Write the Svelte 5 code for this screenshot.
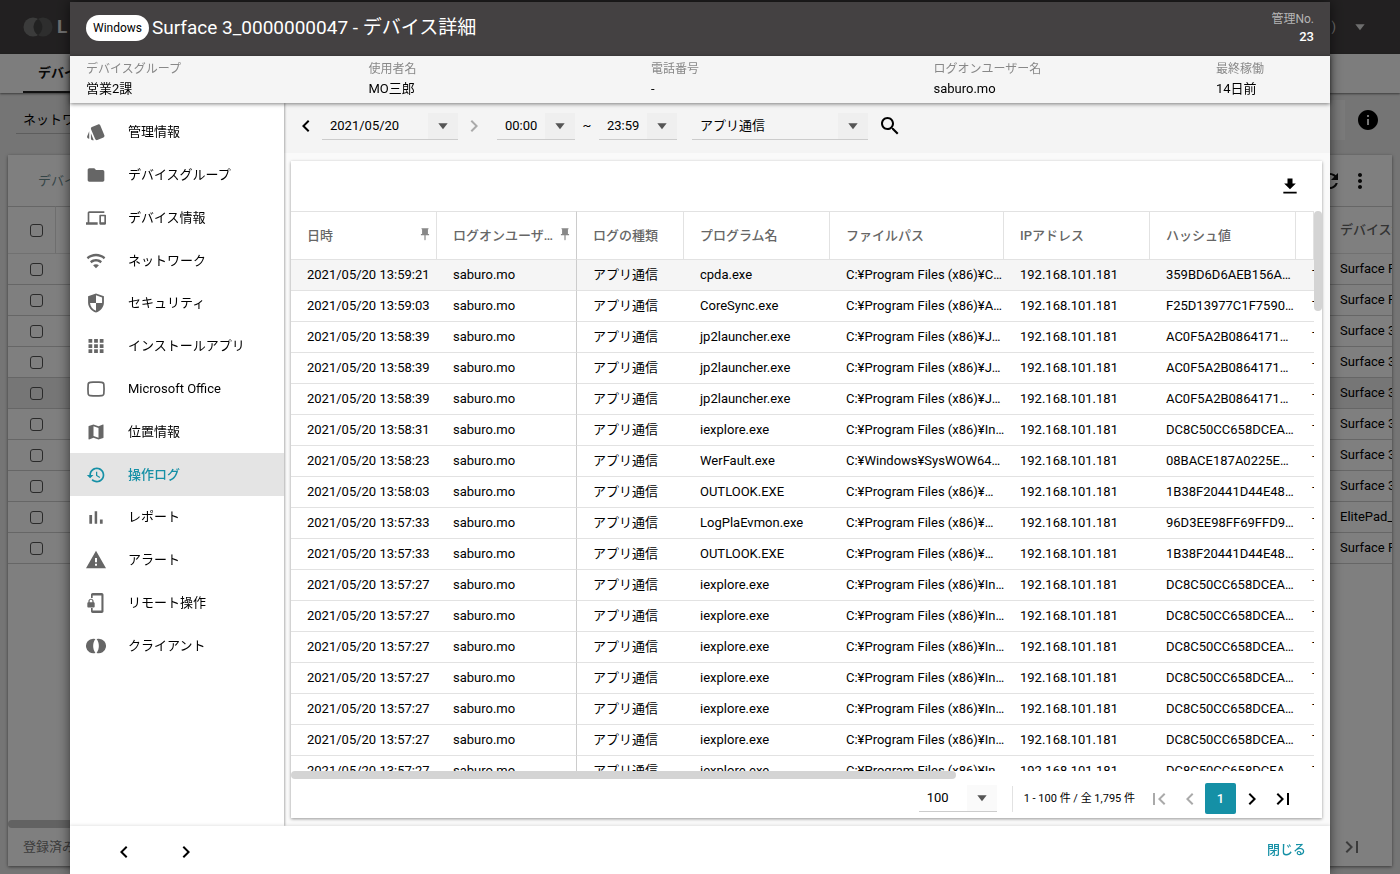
<script>
	const menu = [
		{ icon: 'style', label: '管理情報' },
		{ icon: 'folder', label: 'デバイスグループ' },
		{ icon: 'devices', label: 'デバイス情報' },
		{ icon: 'wifi', label: 'ネットワーク' },
		{ icon: 'shield', label: 'セキュリティ' },
		{ icon: 'apps', label: 'インストールアプリ' },
		{ icon: 'office', label: 'Microsoft Office' },
		{ icon: 'map', label: '位置情報' },
		{ icon: 'history', label: '操作ログ' },
		{ icon: 'chart', label: 'レポート' },
		{ icon: 'warning', label: 'アラート' },
		{ icon: 'remote', label: 'リモート操作' },
		{ icon: 'client', label: 'クライアント' }
	];

	const paths = {
		style:
			'M2.53 19.65l1.34.56v-9.03l-2.43 5.86c-.41 1.02.08 2.19 1.09 2.61zm19.5-3.7L17.07 3.98c-.31-.75-1.04-1.21-1.81-1.23-.26 0-.53.04-.79.15L7.1 5.95c-.75.31-1.21 1.03-1.23 1.8-.01.27.04.54.15.8l4.96 11.97c.31.76 1.05 1.22 1.83 1.23.26 0 .52-.05.77-.15l7.36-3.05c1.02-.42 1.51-1.59 1.09-2.6zM5.88 19.75c0 1.1.9 2 2 2h1.45l-3.45-8.34v6.34z',
		folder:
			'M10 4H4c-1.1 0-1.99.9-1.99 2L2 18c0 1.1.9 2 2 2h16c1.1 0 2-.9 2-2V8c0-1.1-.9-2-2-2h-8l-2-2z',
		devices:
			'M4 6h18V4H4c-1.1 0-2 .9-2 2v11H0v3h14v-3H4V6zm19 2h-6c-.55 0-1 .45-1 1v10c0 .55.45 1 1 1h6c.55 0 1-.45 1-1V9c0-.55-.45-1-1-1zm-1 9h-4v-7h4v7z',
		wifi: 'M.8 7.6l1.8 2.2c5.3-4.6 13.5-4.6 18.8 0l1.8-2.2C16.9 1.9 7.1 1.9.8 7.6zM4.8 12.4l1.8 2.2c3.1-2.7 7.7-2.7 10.8 0l1.8-2.2c-4.1-3.7-10.3-3.7-14.4 0zM8.5 17l3.5 3.7 3.5-3.7c-1.9-1.6-5.1-1.6-7 0z',
		shield:
			'M12 .5L2.5 4v7.5c0 5.6 4 10.4 9.5 12 5.5-1.6 9.5-6.4 9.5-12V4zM12 2.8l7.3 2.7V12H12v9.2C7.9 19.8 5.2 16.3 4.8 12H12z',
		apps: 'M3 8h4.500V3.500H3V8zm6.750 12.500h4.500V16h-4.500zM3 20.500h4.500V16H3zM3 14.250h4.500v-4.500H3zm6.750 0h4.500v-4.500h-4.500zM16.500 3.500V8H21V3.500zM9.750 8h4.500V3.500h-4.500zm6.750 6.250H21v-4.500h-4.500zm0 6.250H21V16h-4.500z',
		office:
			'M5 3C9 2.6 15 2.6 19 3c2 .2 3.2 1.3 3.4 3.2.4 3.7.4 7.9 0 11.6-.2 1.9-1.4 3-3.4 3.2-4 .4-10 .4-14 0-2-.2-3.2-1.3-3.4-3.2-.4-3.700-.4-7.900 0-11.600C1.800 4.300 3 3.200 5 3zM5.400 5c-1.200.1-1.700.7-1.800 1.600-.3 3.500-.3 7.300 0 10.800.1.9.6 1.500 1.800 1.600 4.100.4 9.100.4 13.200 0 1.200-.1 1.700-.7 1.800-1.600.3-3.500.3-7.300 0-10.800-.1-.9-.6-1.500-1.800-1.600-4.100-.4-9.100-.4-13.200 0z',
		map: 'M20.5 3l-.16.03L15 5.1 9 3 3.36 4.9c-.21.07-.36.25-.36.48V20.5c0 .28.22.5.5.5l.16-.03L9 18.9l6 2.1 5.64-1.9c.21-.07.36-.25.36-.48V3.5c0-.28-.22-.5-.5-.5zM15 19l-6-2.11V5l6 2.11V19z',
		history:
			'M13 3c-4.97 0-9 4.03-9 9H1l3.89 3.89.07.14L9 12H6c0-3.87 3.13-7 7-7s7 3.13 7 7-3.13 7-7 7c-1.93 0-3.68-.79-4.94-2.06l-1.42 1.42C8.27 19.99 10.51 21 13 21c4.97 0 9-4.03 9-9s-4.03-9-9-9zm-1 5v5l4.28 2.54.72-1.21-3.5-2.08V8H12z',
		chart: 'M4 9.5h3.3V20H4zM10.4 5h3v15h-3zM16.7 15H20v5h-3.3z',
		warning: 'M0 22h24L12 1 0 22zm13.2-3h-2.4v-2.4h2.4V19zm0-4.4h-2.4V9.5h2.4v5.1z',
		remote:
			'M19 0H8C6.9 0 6 .9 6 2v4h2V3h10.5v18H8v-3H6v4c0 1.1.9 2 2 2h11c1.1 0 2-.9 2-2V2c0-1.1-.9-2-2-2zM9.1 11V9.7C9.1 8 7.7 6.8 6 6.8S2.9 8 2.9 9.7V11c-.7 0-1.3.6-1.3 1.3v3.8c0 .7.6 1.4 1.3 1.4h6.2c.7 0 1.3-.7 1.3-1.4v-3.8c0-.7-.6-1.3-1.3-1.3zm-1.5 0H4.4V9.7c0-.9.7-1.5 1.6-1.500s1.600.6 1.600 1.500V11z',
		client:
			'M8.5 3.3a8.7 8.7 0 1 0 2.8 17c-3.600-4.800-3.600-11.800 0-16.600a8.700 8.700 0 0 0-2.800-.4zM15.500 3.300a8.700 8.700 0 1 1-2.800 17c3.600-4.800 3.600-11.800 0-16.600a8.700 8.700 0 0 1 2.800-.4z',
		left: 'M15.41 7.41L14 6l-6 6 6 6 1.41-1.41L10.83 12z',
		right: 'M10 6L8.59 7.41 13.17 12l-4.58 4.59L10 18l6-6z',
		first: 'M18.41 16.59L13.82 12l4.59-4.59L17 6l-6 6 6 6zM6 6h2v12H6z',
		last: 'M5.59 7.41L10.18 12l-4.59 4.59L7 18l6-6-6-6zM16 6h2v12h-2z',
		caret: 'M5 8h14l-7 9z',
		search:
			'M15.5 14h-.79l-.28-.27C15.41 12.59 16 11.11 16 9.5 16 5.91 13.09 3 9.5 3S3 5.91 3 9.5 5.91 16 9.5 16c1.61 0 3.09-.59 4.23-1.57l.27.28v.79l5 4.99L20.49 19l-4.99-5zm-6 0C7.01 14 5 11.99 5 9.5S7.01 5 9.5 5 14 7.01 14 9.5 11.99 14 9.5 14z',
		download: 'M19 9h-4V3H9v6H5l7 7 7-7zM4 19v2h16v-2H4z',
		pin: 'M6 2h12v2h-1v8h2v2h-6v8l-1 1-1-1v-8H5v-2h2V4H6z',
		info: 'M12 2C6.48 2 2 6.48 2 12s4.48 10 10 10 10-4.48 10-10S17.52 2 12 2zm1 15h-2v-6h2v6zm0-8h-2V7h2v2z',
		more: 'M12 8c1.1 0 2-.9 2-2s-.9-2-2-2-2 .9-2 2 .9 2 2 2zm0 2c-1.1 0-2 .9-2 2s.9 2 2 2 2-.9 2-2-.9-2-2-2zm0 6c-1.1 0-2 .9-2 2s.9 2 2 2 2-.9 2-2-.9-2-2-2z',
		refresh:
			'M17.65 6.35C16.2 4.9 14.21 4 12 4c-4.42 0-7.99 3.58-7.99 8s3.57 8 7.99 8c3.73 0 6.84-2.55 7.73-6h-2.08c-.82 2.33-3.04 4-5.65 4-3.31 0-6-2.69-6-6s2.69-6 6-6c1.66 0 3.14.69 4.22 1.78L13 11h7V4l-2.35 2.35z'
	};

	const logs = [
		['13:59:21', 'cpda.exe', 'C:¥Program Files (x86)¥C…', '359BD6D6AEB156A…'],
		['13:59:03', 'CoreSync.exe', 'C:¥Program Files (x86)¥A…', 'F25D13977C1F7590…'],
		['13:58:39', 'jp2launcher.exe', 'C:¥Program Files (x86)¥J…', 'AC0F5A2B0864171…'],
		['13:58:39', 'jp2launcher.exe', 'C:¥Program Files (x86)¥J…', 'AC0F5A2B0864171…'],
		['13:58:39', 'jp2launcher.exe', 'C:¥Program Files (x86)¥J…', 'AC0F5A2B0864171…'],
		['13:58:31', 'iexplore.exe', 'C:¥Program Files (x86)¥In…', 'DC8C50CC658DCEA…'],
		['13:58:23', 'WerFault.exe', 'C:¥Windows¥SysWOW64…', '08BACE187A0225E…'],
		['13:58:03', 'OUTLOOK.EXE', 'C:¥Program Files (x86)¥…', '1B38F20441D44E48…'],
		['13:57:33', 'LogPlaEvmon.exe', 'C:¥Program Files (x86)¥…', '96D3EE98FF69FFD9…'],
		['13:57:33', 'OUTLOOK.EXE', 'C:¥Program Files (x86)¥…', '1B38F20441D44E48…'],
		...Array.from({ length: 7 }, () => [
			'13:57:27',
			'iexplore.exe',
			'C:¥Program Files (x86)¥In…',
			'DC8C50CC658DCEA…'
		])
	];

	const devices = [
		'Surface Pro',
		'Surface Pro',
		'Surface 3',
		'Surface 3',
		'Surface 3',
		'Surface 3',
		'Surface 3',
		'Surface 3',
		'ElitePad_',
		'Surface Pro'
	];

	let current = $state('操作ログ');
</script>

{#snippet icon(name, size = 20)}
	<svg class="icon" width={size} height={size} viewBox="0 0 24 24" aria-hidden="true">
		<path d={paths[name]} fill-rule="evenodd" />
	</svg>
{/snippet}

{#snippet dropdown(label, value, kind)}
	<div class="dropdown {kind}">
		<select aria-label={label}>
			<option>{value}</option>
		</select>
		<span class="arrow">{@render icon('caret', 16)}</span>
	</div>
{/snippet}

<div class="page">
	<header class="app-bar">
		<svg width="30" height="20" viewBox="0 0 30 20" aria-hidden="true">
			<circle cx="10" cy="10" r="9.5" fill="#777" />
			<circle cx="20" cy="10" r="9.5" fill="#5c5c5c" />
			<path d="M15 2a9.5 9.5 0 0 1 0 16a9.5 9.5 0 0 1 0-16z" fill="#444" />
		</svg>
		<b class="brand">L</b>
		<span class="account">)</span>
		{@render icon('caret', 16)}
	</header>
	<nav class="tabs"><a href="#devices">デバイス</a></nav>
	<div class="filter">
		<span class="filter-name">ネットワーク</span>
		<span class="filter-box"></span>
		{@render icon('info', 24)}
	</div>
	<section class="list">
		<div class="list-bar">
			<span>デバイス</span>
			{@render icon('refresh', 24)}
			{@render icon('more', 24)}
		</div>
		<table class="device-table">
			<thead>
				<tr>
					<th class="check"><input type="checkbox" aria-label="すべて選択" /></th>
					<th></th>
					<th class="name">デバイス名</th>
				</tr>
			</thead>
			<tbody>
				{#each devices as device, i}
					<tr class:picked={i === 4}>
						<td class="check"><input type="checkbox" aria-label={device} /></td>
						<td></td>
						<td class="name">{device}</td>
					</tr>
				{/each}
			</tbody>
		</table>
		<div class="list-scroll"></div>
		<div class="list-foot">
			<span>登録済み</span>
			{@render icon('last', 24)}
		</div>
	</section>
</div>

<div class="scrim"></div>

<div class="modal" role="dialog" aria-labelledby="title">
	<header class="modal-head">
		<span class="os">Windows</span>
		<h1 id="title">Surface 3_0000000047 - デバイス詳細</h1>
		<div class="number">
			<span>管理No.</span>
			<b>23</b>
		</div>
	</header>

	<dl class="summary">
		<div><dt>デバイスグループ</dt><dd>営業2課</dd></div>
		<div><dt>使用者名</dt><dd>MO三郎</dd></div>
		<div><dt>電話番号</dt><dd>-</dd></div>
		<div><dt>ログオンユーザー名</dt><dd>saburo.mo</dd></div>
		<div><dt>最終稼働</dt><dd>14日前</dd></div>
	</dl>

	<div class="body">
		<nav class="side">
			<ul>
				{#each menu as item}
					<li>
						<button class:active={item.label === current} onclick={() => (current = item.label)}>
							{@render icon(item.icon)}
							{item.label}
						</button>
					</li>
				{/each}
			</ul>
		</nav>

		<main>
			<div class="search-bar">
				<button class="nav" aria-label="前の日">{@render icon('left', 24)}</button>
				{@render dropdown('日付', '2021/05/20', 'date')}
				<button class="nav next" aria-label="次の日" disabled>{@render icon('right', 24)}</button>
				{@render dropdown('開始', '00:00', 'time')}
				<span class="tilde">~</span>
				{@render dropdown('終了', '23:59', 'time')}
				{@render dropdown('ログの種類', 'アプリ通信', 'type')}
				<button class="nav" aria-label="検索">{@render icon('search', 24)}</button>
			</div>

			<section class="card">
				<div class="card-bar">
					<button class="nav" aria-label="ダウンロード">{@render icon('download')}</button>
				</div>
				<div class="grid">
					<div class="viewport">
						<table class="log-table">
							<colgroup>
								<col class="c-time" />
								<col class="c-user" />
								<col class="c-kind" />
								<col class="c-mid" />
								<col />
								<col class="c-mid" />
								<col class="c-mid" />
								<col class="c-rest" />
							</colgroup>
							<thead>
								<tr>
									<th><div>日時{@render icon('pin', 14)}</div></th>
									<th><div>ログオンユーザ…{@render icon('pin', 14)}</div></th>
									<th>ログの種類</th>
									<th>プログラム名</th>
									<th>ファイルパス</th>
									<th>IPアドレス</th>
									<th>ハッシュ値</th>
									<th>プロトコル</th>
								</tr>
							</thead>
							<tbody>
								{#each logs as [time, program, path, hash]}
									<tr>
										<td>2021/05/20 {time}</td>
										<td>saburo.mo</td>
										<td>アプリ通信</td>
										<td>{program}</td>
										<td>{path}</td>
										<td>192.168.101.181</td>
										<td>{hash}</td>
										<td>TCP</td>
									</tr>
								{/each}
							</tbody>
						</table>
					</div>
					<div class="track-y"><div class="thumb"></div></div>
					<div class="track-x"><div class="thumb"></div></div>
				</div>
				<div class="pager">
					{@render dropdown('表示件数', '100', 'time')}
					<span class="count">1 - 100 件 / 全 1,795 件</span>
					<button disabled aria-label="最初">{@render icon('first', 24)}</button>
					<button disabled aria-label="前へ">{@render icon('left', 24)}</button>
					<button class="page-no">1</button>
					<button aria-label="次へ">{@render icon('right', 24)}</button>
					<button aria-label="最後">{@render icon('last', 24)}</button>
				</div>
			</section>
		</main>
	</div>

	<footer class="modal-foot">
		<button class="step" aria-label="前のデバイス">{@render icon('left', 24)}</button>
		<button class="step" aria-label="次のデバイス">{@render icon('right', 24)}</button>
		<button class="close">閉じる</button>
	</footer>
</div>

<style>
	:global(body) {
		font-family: Roboto, 'Noto Sans CJK JP', sans-serif;
		font-size: 13px;
		line-height: 18px;
		color: #000;
		overflow: hidden;
	}
	.icon {
		display: block;
		flex: none;
		fill: currentColor;
	}
	button {
		display: flex;
		align-items: center;
		justify-content: center;
		padding: 0;
		border: none;
		background: none;
		color: inherit;
		font: inherit;
		cursor: pointer;
	}
	button:disabled {
		color: #aaa;
		cursor: default;
	}
	table {
		width: 100%;
		table-layout: fixed;
		border-collapse: separate;
		border-spacing: 0;
	}
	th,
	td {
		box-sizing: border-box;
		height: 31px;
		padding: 0 0 0 16px;
		border-bottom: 1px solid #e2e2e2;
		text-align: left;
		white-space: nowrap;
		overflow: hidden;
	}
	th {
		height: 48px;
		color: #666;
		font-weight: 500;
	}

	/* device list behind the dialog */
	.page {
		display: flex;
		flex-direction: column;
		height: 100vh;
		background: #eaeaea;
	}
	.app-bar {
		display: flex;
		align-items: center;
		height: 54px;
		padding: 0 32px 0 23px;
		background: #444142;
		color: #ddd;
	}
	.brand {
		margin-left: 4px;
		font-size: 19px;
	}
	.account {
		margin-left: auto;
		margin-right: 16px;
	}
	.tabs {
		display: flex;
		height: 39px;
		padding-left: 23px;
		background: #fafafa;
		box-shadow: 0 1px 2px rgba(0, 0, 0, 0.5);
	}
	.tabs a {
		box-sizing: border-box;
		width: 85px;
		padding-left: 15px;
		border-bottom: 2px solid #222;
		color: #111;
		font-weight: 700;
		line-height: 37px;
		text-decoration: none;
	}
	.filter {
		display: flex;
		align-items: center;
		height: 54px;
		padding: 0 20px 0 16px;
	}
	.filter-name {
		width: 120px;
		padding-left: 7px;
		border-bottom: 1px solid #bbb;
		line-height: 26px;
	}
	.filter-box {
		width: 60px;
		height: 40px;
		margin-left: auto;
		margin-right: 11px;
		background: #f4f4f4;
	}
	.list {
		display: flex;
		flex: 1;
		flex-direction: column;
		margin: 8px;
		background: #fff;
		box-shadow: 0 1px 3px rgba(0, 0, 0, 0.5);
		overflow: hidden;
	}
	.list-bar {
		display: flex;
		align-items: center;
		height: 51px;
		padding: 0 20px 0 30px;
		color: #111;
	}
	.list-bar span {
		flex: 1;
		color: #6b8a8e;
	}
	.list-bar .icon:last-child {
		margin-left: 6px;
	}
	.device-table th {
		border-top: 1px solid #ccc;
	}
	.device-table .check {
		width: 48px;
		padding: 0 0 0 22px;
	}
	.device-table th.check {
		border-right: 1px solid #ddd;
	}
	.device-table .name {
		width: 68px;
	}
	.device-table td {
		border-color: #ccc;
	}
	.device-table .picked td {
		background: #ececec;
	}
	.device-table input {
		display: block;
		width: 13px;
		height: 13px;
		margin: 0;
		appearance: none;
		border: 1px solid #555;
		border-radius: 3px;
	}
	.list-scroll {
		width: 60%;
		height: 8px;
		margin-top: auto;
		border-radius: 4px;
		background: #c4c4c4;
	}
	.list-foot {
		display: flex;
		align-items: center;
		justify-content: space-between;
		height: 38px;
		padding: 0 28px 0 15px;
		color: #777;
	}
	.scrim {
		position: fixed;
		inset: 0;
		background: rgba(0, 0, 0, 0.5);
	}

	/* dialog */
	.modal {
		position: fixed;
		inset: 2px 5% 0;
		display: flex;
		flex-direction: column;
		background: #fff;
		box-shadow: 0 0 12px rgba(0, 0, 0, 0.6);
	}
	.modal-head {
		display: flex;
		align-items: center;
		box-sizing: border-box;
		height: 54px;
		padding: 0 16px 2px;
		background: #444142;
		color: #fff;
	}
	.os {
		padding: 0 7px;
		border-radius: 13px;
		background: #fff;
		color: #000;
		font-size: 12px;
		line-height: 26px;
	}
	h1 {
		flex: 1;
		margin: 0 0 0 3px;
		font-size: 19px;
		font-weight: 400;
		line-height: 26px;
	}
	.number {
		display: grid;
		text-align: right;
		line-height: 17px;
	}
	.number span {
		color: #b5b5b5;
		font-size: 12px;
	}
	.number b {
		font-weight: 500;
	}
	.summary {
		position: relative;
		display: grid;
		grid-template-columns: repeat(4, 1fr) 98px;
		margin: 0;
		padding: 4px 16px 5px;
		background: #f5f5f5;
		box-shadow: 0 1px 4px rgba(0, 0, 0, 0.5);
		line-height: 19px;
		z-index: 1;
	}
	dt {
		color: #888;
		font-size: 12px;
	}
	dd {
		margin: 0;
	}
	.body {
		display: flex;
		flex: 1;
		min-height: 0;
	}
	.side {
		width: 214px;
		box-shadow: 1px 0 2px rgba(0, 0, 0, 0.3);
		z-index: 0;
	}
	.side ul {
		display: grid;
		grid-auto-rows: 1fr;
		height: 556px;
		margin: 0;
		padding: 8px 0 0;
		list-style: none;
	}
	.side button {
		gap: 22px;
		justify-content: flex-start;
		width: 100%;
		height: 100%;
		padding-left: 16px;
	}
	.side .icon {
		color: #666;
	}
	.side .active {
		background: #e4e4e4;
		color: #1590a6;
		font-weight: 500;
	}
	.side .active .icon {
		color: #1590a6;
	}
	main {
		display: flex;
		flex: 1;
		flex-direction: column;
		min-width: 0;
		background: #fafafa;
	}
	.search-bar {
		display: flex;
		align-items: center;
		box-sizing: border-box;
		height: 50px;
		padding: 0 0 4px 10px;
		background: #f4f4f4;
	}
	.nav {
		width: 24px;
		height: 24px;
	}
	.next {
		margin-right: 11px;
	}
	.dropdown {
		display: grid;
		grid-template-columns: 1fr 30px;
		height: 26px;
		border-bottom: 1px solid #ccc;
	}
	.dropdown select {
		grid-area: 1 / 1 / 2 / 3;
		appearance: none;
		padding: 0 0 0 8px;
		border: none;
		background: none;
		color: inherit;
		font: inherit;
	}
	.arrow {
		display: grid;
		place-items: center;
		grid-area: 1 / 2;
		background: rgba(0, 0, 0, 0.02);
		color: #555;
		pointer-events: none;
	}
	.date {
		width: 136px;
		margin: 0 4px;
	}
	.time {
		width: 78px;
	}
	.type {
		width: 176px;
		margin: 0 10px 0 15px;
	}
	.tilde {
		width: 24px;
		text-align: center;
	}
	.card {
		display: flex;
		flex: 1;
		flex-direction: column;
		min-height: 0;
		margin: 8px 8px 8px 7px;
		background: #fff;
		box-shadow: 0 1px 3px rgba(0, 0, 0, 0.4);
	}
	.card-bar {
		display: flex;
		align-items: center;
		justify-content: flex-end;
		height: 50px;
		padding-right: 20px;
	}
	.grid {
		display: grid;
		flex: 1;
		grid-template: minmax(0, 1fr) 8px / minmax(0, 1fr) 8px;
		min-height: 0;
	}
	.viewport {
		overflow: hidden;
	}
	.log-table th {
		height: 49px;
		border-top: 1px solid #e2e2e2;
		border-right: 1px solid #e2e2e2;
	}
	.log-table th:nth-child(2),
	.log-table td:nth-child(2) {
		border-right: 1px solid #ccc;
	}
	.log-table th div {
		display: flex;
		justify-content: space-between;
		padding-right: 4px;
	}
	.log-table th .icon {
		color: #888;
	}
	.log-table tbody tr:first-child {
		background: #f5f5f5;
	}
	.c-time {
		width: 146px;
	}
	.c-user {
		width: 140px;
	}
	.c-kind {
		width: 107px;
	}
	.c-mid {
		width: 146px;
	}
	.c-rest {
		width: 18px;
	}
	.thumb {
		border-radius: 4px;
		background: #d4d4d4;
	}
	.track-y .thumb {
		height: 100px;
	}
	.track-x .thumb {
		width: 65%;
		height: 8px;
	}
	.pager {
		display: flex;
		align-items: center;
		justify-content: flex-end;
		height: 39px;
		padding-right: 24px;
	}
	.pager button {
		width: 31px;
		height: 31px;
	}
	.count {
		margin: 0 8px 0 15px;
		padding-left: 11px;
		border-left: 1px solid #e2e2e2;
		font-size: 11px;
		line-height: 26px;
	}
	.pager .page-no {
		border-radius: 2px;
		background: #1590a6;
		color: #fff;
		font-weight: 500;
	}
	.modal-foot {
		position: relative;
		display: flex;
		align-items: center;
		gap: 38px;
		height: 48px;
		padding: 0 24px 0 42px;
		background: #fff;
		box-shadow: 0 -1px 3px rgba(0, 0, 0, 0.1);
		z-index: 1;
	}
	.step {
		padding-top: 4px;
	}
	.close {
		margin-left: auto;
		color: #1590a6;
		font-weight: 500;
	}
</style>
